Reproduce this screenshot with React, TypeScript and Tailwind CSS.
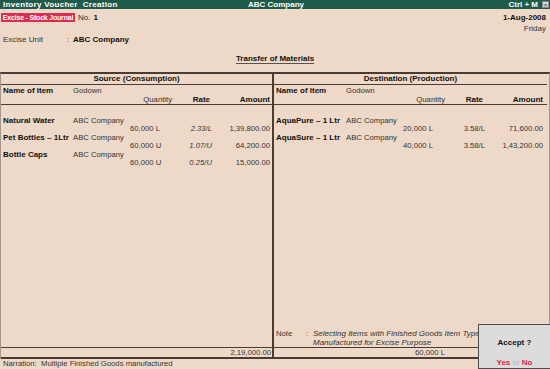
import React from 'react';

type Item = {
  name: string;
  godown: string;
  qty: string;
  rate: string;
  amount: string;
};

const source: Item[] = [
  { name: 'Natural Water', godown: 'ABC Company', qty: '60,000 L', rate: '2.33/L', amount: '1,39,800.00' },
  { name: 'Pet Bottles – 1Ltr', godown: 'ABC Company', qty: '60,000 U', rate: '1.07/U', amount: '64,200.00' },
  { name: 'Bottle Caps', godown: 'ABC Company', qty: '60,000 U', rate: '0.25/U', amount: '15,000.00' },
];

const destination: Item[] = [
  { name: 'AquaPure – 1 Ltr', godown: 'ABC Company', qty: '20,000 L', rate: '3.58/L', amount: '71,600.00' },
  { name: 'AquaSure – 1 Ltr', godown: 'ABC Company', qty: '40,000 L', rate: '3.58/L', amount: '1,43,200.00' },
];

const ItemRow = ({ item, italicRate }: { item: Item; italicRate?: boolean }) => (
  <div>
    <div className="flex h-[9px] items-center">
      <span className="w-[72px] shrink-0 whitespace-nowrap pl-[2px] text-[8px] font-bold text-[#111]">{item.name}</span>
      <span className="whitespace-nowrap">{item.godown}</span>
    </div>
    <div className="flex h-[8px] items-center">
      <span className="w-[129px] shrink-0" />
      <span className="w-[42px] shrink-0 whitespace-nowrap">{item.qty}</span>
      <span className={`w-[40px] shrink-0 text-right ${italicRate ? 'italic' : ''}`}>{item.rate}</span>
      <span className="w-[58px] shrink-0 text-right">{item.amount}</span>
    </div>
  </div>
);

const Section = ({
  title,
  items,
  italicRate,
  divider,
  note,
}: {
  title: string;
  items: Item[];
  italicRate?: boolean;
  divider?: boolean;
  note?: boolean;
}) => (
  <div className={`flex w-[273px] shrink-0 flex-col ${divider ? 'border-r-2 border-[#4a3c34]' : ''}`}>
    <div className="flex h-[11px] items-center justify-center border-b border-[#4a3c34] text-[8px] font-bold text-[#111]">
      {title}
    </div>
    <div className="h-[20px] border-b border-[#4a3c34]">
      <div className="flex h-[10px] items-center pt-[1px]">
        <span className="w-[72px] shrink-0 pl-[2px] text-[8px] font-bold text-[#111]">Name of Item</span>
        <span>Godown</span>
      </div>
      <div className="flex h-[9px] items-center">
        <span className="w-[129px] shrink-0" />
        <span className="w-[42px] shrink-0 text-right">Quantity</span>
        <span className="w-[40px] shrink-0 pr-[2px] text-right text-[8px] font-bold text-[#111]">Rate</span>
        <span className="w-[58px] shrink-0 text-right text-[8px] font-bold text-[#111]">Amount</span>
      </div>
    </div>
    <div className="flex flex-1 flex-col pt-[11px]">
      {items.map((it) => (
        <ItemRow key={it.name} item={it} italicRate={italicRate} />
      ))}
      {note && (
        <div className="mt-auto">
          <div className="flex h-[9px] items-center">
            <span className="w-[32px] shrink-0 pl-[2px]">Note</span>
            <span className="w-[7px] shrink-0">:</span>
            <span className="whitespace-nowrap text-[8px] italic">Selecting Items with Finished Goods Item Type</span>
          </div>
          <div className="flex h-[9px] items-center">
            <span className="w-[39px] shrink-0" />
            <span className="text-[8px] italic">Manufactured for Excise Purpose</span>
          </div>
        </div>
      )}
    </div>
  </div>
);

export default function App() {
  return (
    <div className="relative flex h-[369px] w-[550px] flex-col overflow-hidden bg-[#eed9c8] font-['Liberation_Sans',Arial,sans-serif] text-[7.7px] leading-none text-[#333]">
      {/* title bar */}
      <div className="flex h-[9px] shrink-0 items-center bg-[#1f5b4a] pl-[3px] pr-[1px] text-[8px] font-bold text-white">
        <span className="flex-1 whitespace-nowrap tracking-[0.3px]">Inventory Voucher&nbsp; Creation</span>
        <span className="whitespace-nowrap">ABC Company</span>
        <div className="flex flex-1 items-center justify-end gap-[4px]">
          <span className="whitespace-nowrap">Ctrl + M</span>
          <span className="flex h-[7px] w-[7px] items-center justify-center border border-[#888] bg-[#d8d8d8] text-[6px] font-normal text-[#333]">
            ×
          </span>
        </div>
      </div>

      {/* voucher header */}
      <div className="flex h-[63px] shrink-0 flex-col">
        <div className="mt-[4px] flex h-[9px] items-center justify-between pr-[4px]">
          <div className="flex items-center">
            <span className="ml-[1px] flex h-[9px] w-[74px] items-center justify-center bg-[#d92d52] text-[7px] font-bold tracking-[-0.2px] text-white">
              Excise - Stock Journal
            </span>
            <span className="ml-[3px] text-[8px]">No.</span>
            <span className="ml-[3px] text-[8px] font-bold text-[#111]">1</span>
          </div>
          <span className="text-[8px] font-bold text-[#111]">1-Aug-2008</span>
        </div>
        <div className="mt-[2px] flex h-[9px] items-center justify-end pr-[4px] text-[8px]">Friday</div>
        <div className="mt-[2px] flex h-[9px] items-center pl-[3px]">
          <span className="w-[64px] text-[8px]">Excise Unit</span>
          <span className="w-[6px] text-[8px]">:</span>
          <span className="text-[8px] font-bold text-[#111]">ABC Company</span>
        </div>
        <div className="mt-[10px] flex h-[9px] items-center justify-center">
          <span className="text-[8px] font-bold text-[#111] underline decoration-[#555] underline-offset-2">
            Transfer of Materials
          </span>
        </div>
      </div>

      {/* table */}
      <div className="flex flex-1 flex-col border-x border-x-[#a3968c] border-t-2 border-t-[#4a3c34]">
        <div className="flex flex-1">
          <Section title="Source (Consumption)" items={source} italicRate divider />
          <Section title="Destination (Production)" items={destination} note />
        </div>
        <div className="flex h-[12px] border-t border-b-2 border-[#4a3c34]">
          <div className="flex w-[273px] shrink-0 items-center border-r-2 border-[#4a3c34]">
            <span className="w-[212px] shrink-0" />
            <span className="w-[58px] text-right">2,19,000.00</span>
          </div>
          <div className="flex items-center">
            <span className="w-[129px] shrink-0" />
            <span className="w-[42px] text-right">60,000 L</span>
          </div>
        </div>
      </div>

      {/* narration */}
      <div className="flex h-[10px] shrink-0 items-center pl-[3px]">
        Narration:&nbsp; Multiple Finished Goods manufactured
      </div>

      {/* accept dialog */}
      <div className="absolute left-[478px] top-[324px] flex h-[45px] w-[73px] flex-col items-center border border-[#4d4d4d] bg-[#dcdcdc] text-[8px]">
        <span className="mt-[14px] font-bold text-[#111]">Accept ?</span>
        <span className="mt-[12px] font-bold">
          <span className="text-[#e0224c]">Yes</span>
          <span className="font-normal text-[#b0b0b0]"> or </span>
          <span className="text-[#e0224c]">No</span>
        </span>
      </div>
    </div>
  );
}
